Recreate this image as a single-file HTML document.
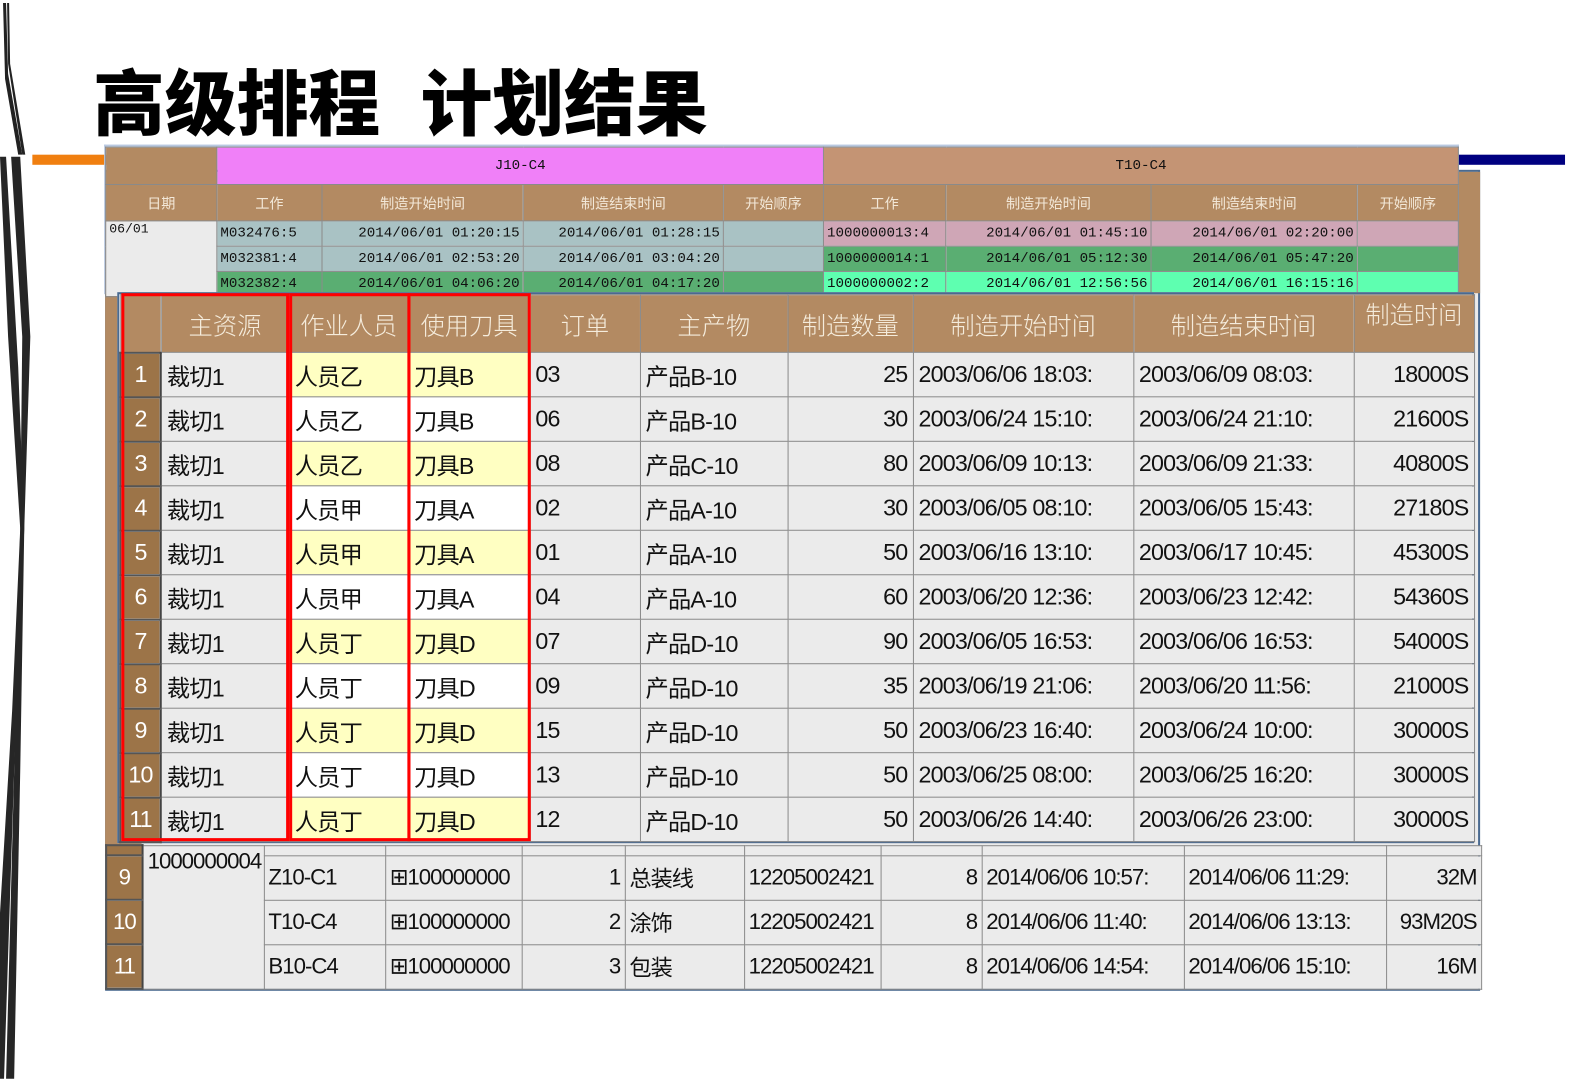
<!DOCTYPE html>
<html><head><meta charset="utf-8">
<style>
*{margin:0;padding:0;box-sizing:border-box}
html,body{width:1587px;height:1082px;overflow:hidden;background:#fff}
#w{position:absolute;left:0;top:0;width:1570px;height:1070px;transform:scale(1.011);transform-origin:0 0}
.abs{position:absolute}
table{border-collapse:collapse;table-layout:fixed;position:absolute}
td{overflow:hidden;white-space:nowrap;border:1px solid #8a8a8a}
.t{position:absolute;top:63px;font-family:"Noto Sans CJK SC",sans-serif;font-weight:900;font-size:71px;line-height:1;color:#000;letter-spacing:0}
#top td{font-family:"Liberation Mono","Noto Sans CJK SC",monospace;font-size:14px;height:25px;padding:0 3px;color:#111}
#top .h1{height:37px;text-align:center}
#top .h2{height:36px;text-align:center;background:#b38a62;color:#f3e8d8;font-family:"Noto Sans CJK SC",sans-serif;font-size:14px}
.tl{background:#a9c2c4}.pk{background:#cfa6b6}.gr{background:#5aae72}.mn{background:#5effb0}
#front td,#back td{font-family:"Liberation Sans","Noto Sans CJK SC",sans-serif;font-size:23px;letter-spacing:-0.8px;color:#111;background:#ebebeb;padding:0 5px;height:44px}
#back td{font-size:22px;letter-spacing:-1px;padding:0 4px}
#back tr.thin td{height:10px}
#front .hd td{background:#b38a62;color:#f5ecdc;text-align:center;height:57px;font-family:"Noto Sans CJK SC",sans-serif;font-size:24px;font-weight:300;letter-spacing:0}
#front td.ix,#back td.ix{background:#9c7448;color:#fff;text-align:center;padding:0;border:2px solid #555;border-right-color:#444}
.y{background:#ffffc2!important}.wh{background:#fff!important}
.r{text-align:right}
</style></head><body><div id="w">
<svg class="abs" style="left:0;top:0" width="40" height="1070" viewBox="0 0 40 1064">
<path d="M3 0 L6 0 L8 70 L22 150 L18 150 L5 75 Z" fill="#222"/>
<path d="M7 0 L9 0 L10 60 L25 150 L22 150 L8 60 Z" fill="#222"/>
<path d="M0 152 L6 152 L18 360 L24 520 L14 760 L4 1064 L0 1064 L0 900 L12 700 L20 520 L8 330 Z" fill="#262626"/>
<path d="M11 152 L20 152 L30 330 L24 520 L20 760 L14 1064 L6 1064 L14 760 L20 520 L22 330 Z" fill="#262626"/>
</svg>
<div class="abs" style="left:32px;top:153px;width:74px;height:10px;background:#f07f10"></div>
<div class="abs" style="left:1440px;top:153px;width:108px;height:10px;background:#000080"></div>
<div class="t" style="left:92px">高级排程</div>
<div class="t" style="left:416px">计划结果</div>

<!-- back table -->
<div class="abs" style="left:104px;top:168px;width:1360px;height:812px;background:#ebebeb;border:2px solid #4a6a90"></div>
<div class="abs" style="left:1442px;top:170px;width:22px;height:120px;background:#b38a62;border-left:1px solid #777"></div>
<div class="abs" style="left:104px;top:170px;width:36px;height:675px;background:#b38a62"></div>
<table id="back" style="left:104px;top:835px;width:1360px">
<colgroup><col style="width:36px"><col style="width:120px"><col style="width:120px"><col style="width:135px"><col style="width:102px"><col style="width:118px"><col style="width:135px"><col style="width:100px"><col style="width:200px"><col style="width:200px"><col style="width:94px"></colgroup>
<tr class="thin"><td class="ix"></td><td rowspan="4" style="vertical-align:top;padding-top:2px">1000000004</td><td></td><td></td><td></td><td></td><td></td><td></td><td></td><td></td><td></td></tr>
<tr><td class="ix">9</td><td>Z10-C1</td><td>⊞100000000</td><td class="r">1</td><td>总装线</td><td>12205002421</td><td class="r">8</td><td>2014/06/06 10:57:</td><td>2014/06/06 11:29:</td><td class="r">32M</td></tr>
<tr><td class="ix">10</td><td>T10-C4</td><td>⊞100000000</td><td class="r">2</td><td>涂饰</td><td>12205002421</td><td class="r">8</td><td>2014/06/06 11:40:</td><td>2014/06/06 13:13:</td><td class="r">93M20S</td></tr>
<tr><td class="ix">11</td><td>B10-C4</td><td>⊞100000000</td><td class="r">3</td><td>包装</td><td>12205002421</td><td class="r">8</td><td>2014/06/06 14:54:</td><td>2014/06/06 15:10:</td><td class="r">16M</td></tr>
</table>

<!-- top table -->
<div class="abs" style="left:103px;top:143px;width:1340px;height:148px;border:2px solid #b8c8e0;border-bottom:none"></div>
<table id="top" style="left:104px;top:145px;width:1338px">
<colgroup><col style="width:110px"><col style="width:104px"><col style="width:199px"><col style="width:198px"><col style="width:99px"><col style="width:121px"><col style="width:203px"><col style="width:204px"><col style="width:100px"></colgroup>
<tr><td class="h1" style="background:#b38a62"></td><td class="h1" colspan="4" style="background:#f080f8">J10-C4</td><td class="h1" colspan="4" style="background:#c49474">T10-C4</td></tr>
<tr><td class="h2">日期</td><td class="h2">工作</td><td class="h2">制造开始时间</td><td class="h2">制造结束时间</td><td class="h2">开始顺序</td><td class="h2">工作</td><td class="h2">制造开始时间</td><td class="h2">制造结束时间</td><td class="h2">开始顺序</td></tr>
<tr><td rowspan="3" style="background:#ebebeb;vertical-align:top;font-size:13px">06/01</td><td class="tl">M032476:5</td><td class="tl r">2014/06/01 01:20:15</td><td class="tl r">2014/06/01 01:28:15</td><td class="tl"></td><td class="pk">1000000013:4</td><td class="pk r">2014/06/01 01:45:10</td><td class="pk r">2014/06/01 02:20:00</td><td class="pk"></td></tr>
<tr><td class="tl">M032381:4</td><td class="tl r">2014/06/01 02:53:20</td><td class="tl r">2014/06/01 03:04:20</td><td class="tl"></td><td class="gr">1000000014:1</td><td class="gr r">2014/06/01 05:12:30</td><td class="gr r">2014/06/01 05:47:20</td><td class="gr"></td></tr>
<tr><td class="gr">M032382:4</td><td class="gr r">2014/06/01 04:06:20</td><td class="gr r">2014/06/01 04:17:20</td><td class="gr"></td><td class="mn">1000000002:2</td><td class="mn r">2014/06/01 12:56:56</td><td class="mn r">2014/06/01 16:15:16</td><td class="mn"></td></tr>
</table>

<!-- front table -->
<div class="abs" style="left:116px;top:289px;width:1342px;height:545px;background:#ebebeb;border:2px solid #4a6a90"></div>
<table id="front" style="left:118px;top:291px;width:1339px">
<colgroup><col style="width:40px"><col style="width:127px"><col style="width:118px"><col style="width:120px"><col style="width:109px"><col style="width:146px"><col style="width:124px"><col style="width:218px"><col style="width:218px"><col style="width:119px"></colgroup>
<tr class="hd"><td></td><td>主资源</td><td>作业人员</td><td>使用刀具</td><td>订单</td><td>主产物</td><td>制造数量</td><td>制造开始时间</td><td>制造结束时间</td><td style="vertical-align:top;padding-top:0">制造时间</td></tr>
<tr><td class="ix">1</td><td>裁切1</td><td class="y">人员乙</td><td class="y">刀具B</td><td>03</td><td>产品B-10</td><td class="r">25</td><td>2003/06/06 18:03:</td><td>2003/06/09 08:03:</td><td class="r">18000S</td></tr>
<tr><td class="ix">2</td><td>裁切1</td><td class="wh">人员乙</td><td class="wh">刀具B</td><td>06</td><td>产品B-10</td><td class="r">30</td><td>2003/06/24 15:10:</td><td>2003/06/24 21:10:</td><td class="r">21600S</td></tr>
<tr><td class="ix">3</td><td>裁切1</td><td class="y">人员乙</td><td class="y">刀具B</td><td>08</td><td>产品C-10</td><td class="r">80</td><td>2003/06/09 10:13:</td><td>2003/06/09 21:33:</td><td class="r">40800S</td></tr>
<tr><td class="ix">4</td><td>裁切1</td><td class="wh">人员甲</td><td class="wh">刀具A</td><td>02</td><td>产品A-10</td><td class="r">30</td><td>2003/06/05 08:10:</td><td>2003/06/05 15:43:</td><td class="r">27180S</td></tr>
<tr><td class="ix">5</td><td>裁切1</td><td class="y">人员甲</td><td class="y">刀具A</td><td>01</td><td>产品A-10</td><td class="r">50</td><td>2003/06/16 13:10:</td><td>2003/06/17 10:45:</td><td class="r">45300S</td></tr>
<tr><td class="ix">6</td><td>裁切1</td><td class="wh">人员甲</td><td class="wh">刀具A</td><td>04</td><td>产品A-10</td><td class="r">60</td><td>2003/06/20 12:36:</td><td>2003/06/23 12:42:</td><td class="r">54360S</td></tr>
<tr><td class="ix">7</td><td>裁切1</td><td class="y">人员丁</td><td class="y">刀具D</td><td>07</td><td>产品D-10</td><td class="r">90</td><td>2003/06/05 16:53:</td><td>2003/06/06 16:53:</td><td class="r">54000S</td></tr>
<tr><td class="ix">8</td><td>裁切1</td><td class="wh">人员丁</td><td class="wh">刀具D</td><td>09</td><td>产品D-10</td><td class="r">35</td><td>2003/06/19 21:06:</td><td>2003/06/20 11:56:</td><td class="r">21000S</td></tr>
<tr><td class="ix">9</td><td>裁切1</td><td class="y">人员丁</td><td class="y">刀具D</td><td>15</td><td>产品D-10</td><td class="r">50</td><td>2003/06/23 16:40:</td><td>2003/06/24 10:00:</td><td class="r">30000S</td></tr>
<tr><td class="ix">10</td><td>裁切1</td><td class="wh">人员丁</td><td class="wh">刀具D</td><td>13</td><td>产品D-10</td><td class="r">50</td><td>2003/06/25 08:00:</td><td>2003/06/25 16:20:</td><td class="r">30000S</td></tr>
<tr><td class="ix">11</td><td>裁切1</td><td class="y">人员丁</td><td class="y">刀具D</td><td>12</td><td>产品D-10</td><td class="r">50</td><td>2003/06/26 14:40:</td><td>2003/06/26 23:00:</td><td class="r">30000S</td></tr>
</table>
<div class="abs" style="left:120px;top:290px;width:166px;height:542px;border:3px solid #f00"></div>
<div class="abs" style="left:286px;top:290px;width:120px;height:542px;border:3px solid #f00"></div>
<div class="abs" style="left:403px;top:290px;width:122px;height:542px;border:3px solid #f00"></div>
</div></body></html>
